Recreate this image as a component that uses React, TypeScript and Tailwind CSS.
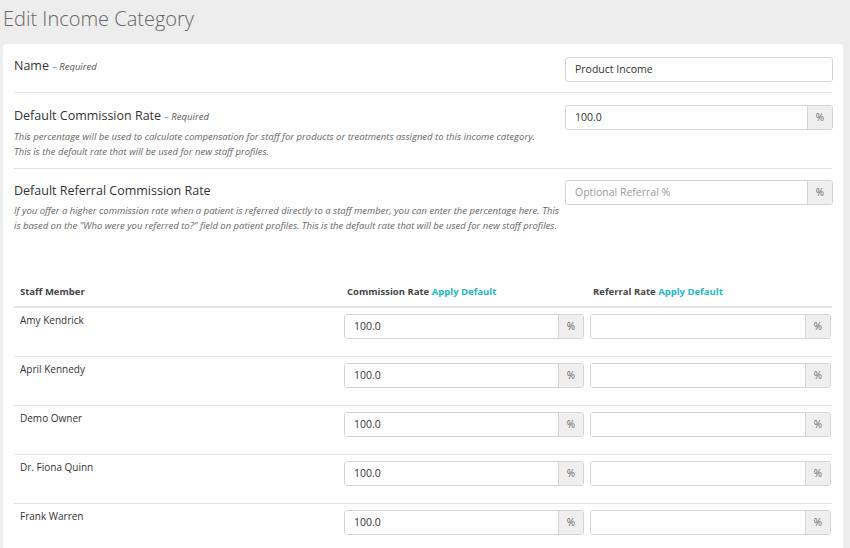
import React from "react";

const staff = ["Amy Kendrick", "April Kennedy", "Demo Owner", "Dr. Fiona Quinn", "Frank Warren"];

function PctInput({ value, placeholder, w }: { value?: string; placeholder?: string; w: string }) {
  return (
    <div className={`flex h-[25px] ${w} border border-[#d4d4d4] rounded-[3px] overflow-hidden`}>
      <div className="flex-1 flex items-center px-[9px] text-[10.5px] text-[#333] bg-white">
        {value ? value : <span className="text-[#9a9a9a]">{placeholder}</span>}
      </div>
      <div className="w-[25px] flex items-center justify-center bg-[#efefef] border-l border-[#d4d4d4] text-[10px] text-[#666]">%</div>
    </div>
  );
}

export default function App() {
  return (
    <div className="w-[850px] h-[548px] overflow-hidden bg-[#ededed] text-[#333]" style={{ fontFamily: "'Open Sans', sans-serif" }}>
      <div className="h-[44px] pl-[3px] flex items-center">
        <h1 className="text-[20px] text-[#666] font-light leading-none -mt-[6px]">Edit Income Category</h1>
      </div>
      <div className="ml-[3px] w-[840px] h-[504px] bg-white rounded-t-[3px] px-[11px]">
        <div className="flex justify-between border-b border-[#e6e6e6] pt-[13px] h-[49px]">
          <div className="text-[12.5px]">Name <span className="text-[9.5px] italic text-[#555]">– Required</span></div>
          <div className="h-[25px] w-[268px] border border-[#d4d4d4] rounded-[3px] flex items-center px-[9px] text-[10.5px] mr-[-1px]">Product Income</div>
        </div>
        <div className="flex justify-between border-b border-[#e6e6e6] pt-[12px] h-[76px]">
          <div>
            <div className="text-[12.5px] mt-[2px]">Default Commission Rate <span className="text-[9.5px] italic text-[#555]">– Required</span></div>
            <p className="text-[9.5px] italic text-[#666] leading-[15px] mt-[3px] w-[530px]">This percentage will be used to calculate compensation for staff for products or treatments assigned to this income category. This is the default rate that will be used for new staff profiles.</p>
          </div>
          <div className="mr-[-1px]"><PctInput value="100.0" w="w-[268px]" /></div>
        </div>
        <div className="flex justify-between pt-[11px] h-[108px]">
          <div>
            <div className="text-[12.5px] mt-[2px]">Default Referral Commission Rate</div>
            <p className="text-[9.5px] italic text-[#666] leading-[15px] mt-[2px] w-[545px]">If you offer a higher commission rate when a patient is referred directly to a staff member, you can enter the percentage here. This is based on the "Who were you referred to?" field on patient profiles. This is the default rate that will be used for new staff profiles.</p>
          </div>
          <div className="mr-[-1px]"><PctInput placeholder="Optional Referral %" w="w-[268px]" /></div>
        </div>
        <div className="flex items-end h-[31px] pb-[7px] border-b-2 border-[#e3e3e3] text-[9.5px] font-bold text-[#444]">
          <div className="w-[333px] pl-[6px]">Staff Member</div>
          <div className="w-[246px]">Commission Rate <span className="text-[#20b8c8]">Apply Default</span></div>
          <div>Referral Rate <span className="text-[#20b8c8]">Apply Default</span></div>
        </div>
        {staff.map((s, i) => (
          <div key={s} className={`flex h-[49px] pt-[6px] ${i < staff.length - 1 ? "border-b border-[#e6e6e6]" : ""}`}>
            <div className="w-[330px] pl-[6px] text-[10px] -mt-[1px]">{s}</div>
            <PctInput value="100.0" w="w-[240px]" />
            <div className="ml-[6px]"><PctInput w="w-[241px]" /></div>
          </div>
        ))}
      </div>
    </div>
  );
}
